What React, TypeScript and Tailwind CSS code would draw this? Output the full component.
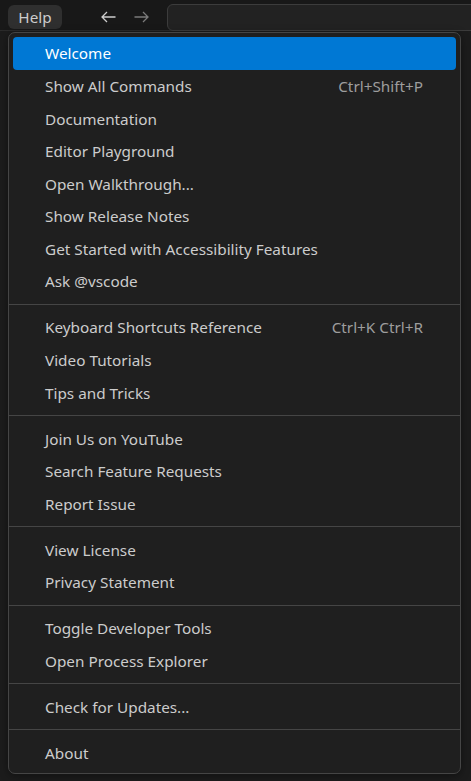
import { Fragment } from 'react';

type Item = { label: string; shortcut?: string; active?: boolean };

const groups: Item[][] = [
  [
    { label: 'Welcome', active: true },
    { label: 'Show All Commands', shortcut: 'Ctrl+Shift+P' },
    { label: 'Documentation' },
    { label: 'Editor Playground' },
    { label: 'Open Walkthrough...' },
    { label: 'Show Release Notes' },
    { label: 'Get Started with Accessibility Features' },
    { label: 'Ask @vscode' }
  ],
  [
    { label: 'Keyboard Shortcuts Reference', shortcut: 'Ctrl+K Ctrl+R' },
    { label: 'Video Tutorials' },
    { label: 'Tips and Tricks' }
  ],
  [{ label: 'Join Us on YouTube' }, { label: 'Search Feature Requests' }, { label: 'Report Issue' }],
  [{ label: 'View License' }, { label: 'Privacy Statement' }],
  [{ label: 'Toggle Developer Tools' }, { label: 'Open Process Explorer' }],
  [{ label: 'Check for Updates...' }],
  [{ label: 'About' }]
];

function MenuRow({ item }: { item: Item }) {
  return (
    <div
      className={`mx-[4px] h-[32.6px] flex items-center justify-between pl-[32px] pr-[33px] rounded-[4px] ${
        item.active ? 'bg-[#0078d4] text-white' : 'text-[#cccccc]'
      }`}
    >
      <span className="pt-[1px]">{item.label}</span>
      {item.shortcut && <span className="pt-[1px] text-[#9d9d9d]">{item.shortcut}</span>}
    </div>
  );
}

export default function App() {
  return (
    <div
      className="w-[471px] h-[781px] bg-[#1c1c1c] relative overflow-hidden text-[15.3px]"
      style={{ fontFamily: '"Noto Sans", "Open Sans", sans-serif' }}
    >
      <div className="h-[31px] bg-[#181818] border-b border-[#2b2b2b] flex items-start pt-[5px] pl-[8px]">
        <div className="h-[24px] w-[54px] rounded-md bg-[#2f2f2f] text-[#cccccc] flex items-center justify-center">
          Help
        </div>
        <div className="flex items-center gap-[16px] ml-[38px] h-[24px]">
          <svg width="17" height="16" viewBox="0 0 17 16" fill="none" stroke="#cccccc" strokeWidth="1.3">
            <path d="M15.5 8H2M7 3L2 8L7 13" />
          </svg>
          <svg width="17" height="16" viewBox="0 0 17 16" fill="none" stroke="#7a7a7a" strokeWidth="1.3">
            <path d="M1.5 8H15M10 3L15 8L10 13" />
          </svg>
        </div>
        <div className="ml-[17px] -mt-[1px] h-[27px] flex-1 rounded-md border border-[#3c3c3c] bg-[#222222] -mr-[10px]" />
      </div>

      <div className="absolute left-[8px] top-[32px] w-[453px] bg-[#1f1f1f] border border-[#454545] rounded-[7px] py-[4px] shadow-[0_2px_8px_rgba(0,0,0,0.4)]">
        {groups.map((g, gi) => (
          <Fragment key={gi}>
            {gi > 0 && (
              <div className="h-[13.4px] flex items-center">
                <div className="w-full h-px bg-[#454545]" />
              </div>
            )}
            {g.map(item => (
              <MenuRow key={item.label} item={item} />
            ))}
          </Fragment>
        ))}
      </div>
    </div>
  );
}
